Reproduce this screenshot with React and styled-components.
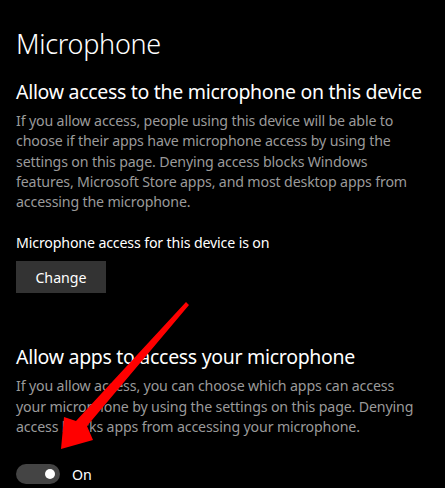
import React from "react";
import styled, { createGlobalStyle } from "styled-components";

const Global = createGlobalStyle`
  html, body {
    margin: 0;
    padding: 0;
    background: #000;
  }
  body {
    font-family: "Noto Sans", "Open Sans", sans-serif;
    color: #fff;
  }
`;

const Page = styled.div`
  position: relative;
  width: 445px;
  height: 488px;
  overflow: hidden;
  background: #000;
  padding: 26px 16px 0 16px;
  box-sizing: border-box;
`;

const Title = styled.h1`
  margin: 0;
  font-size: 27px;
  font-weight: 300;
  line-height: 36px;
  letter-spacing: -0.3px;
`;

const Heading = styled.h2`
  margin: ${(p) => p.$top || 0}px 0 0 0;
  font-size: 19.5px;
  font-weight: 400;
  line-height: 28px;
  letter-spacing: -0.3px;
  white-space: nowrap;
`;

const Body = styled.p`
  margin: 5px 0 0 0;
  font-size: 14.2px;
  line-height: 20.3px;
  color: #9a9a9a;
  letter-spacing: -0.15px;
  white-space: nowrap;
`;

const Label = styled.div`
  margin-top: 21px;
  font-size: 14.2px;
  line-height: 20px;
  color: #fff;
  letter-spacing: -0.15px;
`;

const Button = styled.button`
  display: block;
  margin-top: 8px;
  width: 90px;
  height: 32px;
  border: none;
  background: #333;
  color: #fff;
  font-family: inherit;
  font-size: 14.2px;
  padding: 0;
  cursor: pointer;
`;

const ToggleRow = styled.div`
  margin-top: 27px;
  display: flex;
  align-items: center;
  gap: 12px;
  font-size: 14.2px;
`;

const Track = styled.div`
  width: 44px;
  height: 20px;
  border-radius: 10px;
  background: #444;
  display: flex;
  align-items: center;
  justify-content: flex-end;
  padding: 0 5px;
  box-sizing: border-box;
`;

const Knob = styled.div`
  width: 10px;
  height: 10px;
  border-radius: 50%;
  background: #fff;
`;

const Arrow = styled.svg`
  position: absolute;
  left: 0;
  top: 0;
  pointer-events: none;
`;

export default function App() {
  return (
    <>
      <Global />
      <Page>
        <Title>Microphone</Title>
        <Heading $top={16}>Allow access to the microphone on this device</Heading>
        <Body>
          If you allow access, people using this device will be able to<br />
          choose if their apps have microphone access by using the<br />
          settings on this page. Denying access blocks Windows<br />
          features, Microsoft Store apps, and most desktop apps from<br />
          accessing the microphone.
        </Body>
        <Label>Microphone access for this device is on</Label>
        <Button>Change</Button>
        <Heading $top={50}>Allow apps to access your microphone</Heading>
        <Body>
          If you allow access, you can choose which apps can access<br />
          your microphone by using the settings on this page. Denying<br />
          access blocks apps from accessing your microphone.
        </Body>
        <ToggleRow>
          <Track>
            <Knob />
          </Track>
          <span>On</span>
        </ToggleRow>
        <Arrow width="445" height="488" viewBox="0 0 445 488">
          <polygon
            fill="#f00"
            points="186,302 189,305 87,426 93,440 61,449 64,417 76,421"
          />
        </Arrow>
      </Page>
    </>
  );
}
